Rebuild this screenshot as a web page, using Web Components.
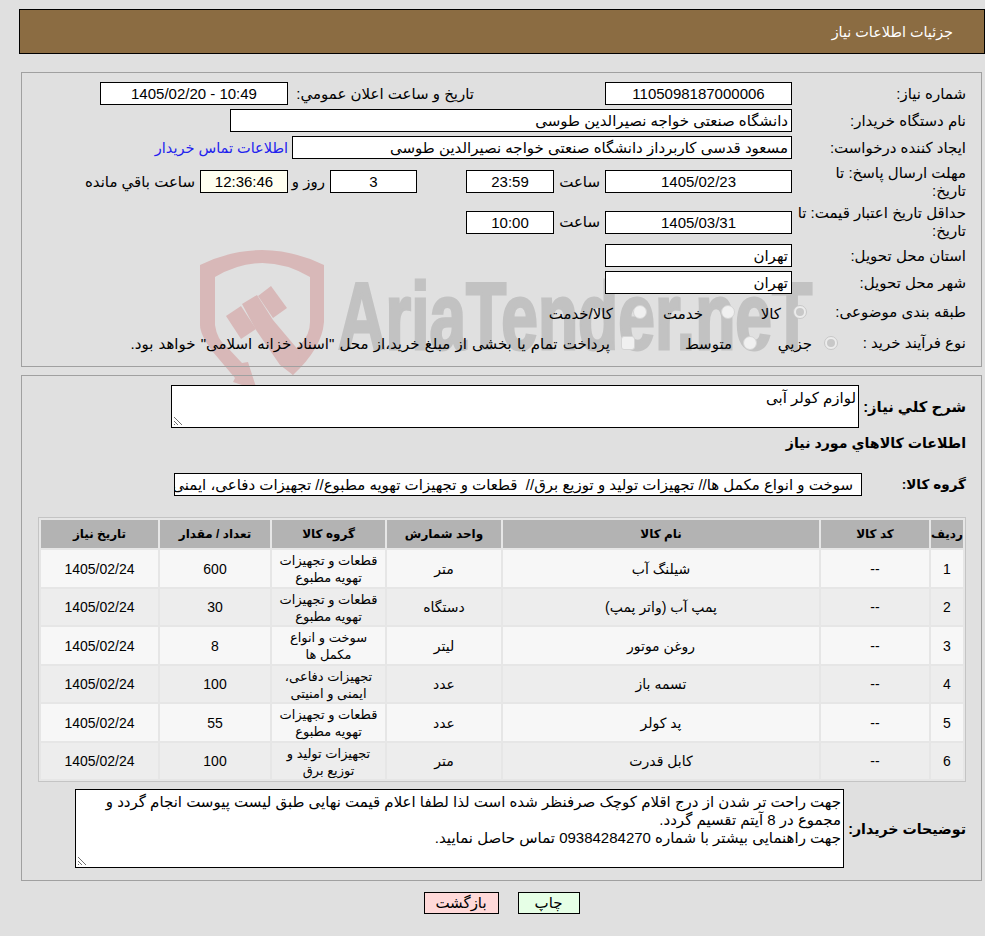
<!DOCTYPE html>
<html lang="fa" dir="rtl">
<head>
<meta charset="utf-8">
<title>جزئیات اطلاعات نیاز</title>
<style>
  html, body { margin: 0; background: #e0e0e0; }
  body {
    position: relative;
    height: 936px;
    overflow: hidden;
    color: #000;
    font: 15px/18px "Liberation Sans", "DejaVu Sans", sans-serif;
  }
  b { font-size: 14.2px; }
  need-row.tall { height: 37px; }
  need-row.tall-b { height: 36px; }
  need-row.opts { height: 28px; }
  need-row.opts-b { height: 25px; }
  need-row.h22 { height: 22px; margin-top: 4px; }
</style>
</head>
<body>

<need-watermark></need-watermark>

<need-header>جزئیات اطلاعات نیاز</need-header>

<need-panel style="margin-top:18px;padding-bottom:11px">
  <need-row>
    <span slot="label">شماره نیاز:</span>
    <need-field w="187">1105098187000006</need-field>
    <need-text w="181" before="131">تاریخ و ساعت اعلان عمومي:</need-text>
    <need-field w="188" before="5" dir="ltr">1405/02/20 - 10:49</need-field>
  </need-row>
  <need-row>
    <span slot="label">نام دستگاه خریدار:</span>
    <need-field w="562" align="right">دانشگاه صنعتی خواجه نصیرالدین طوسی</need-field>
  </need-row>
  <need-row>
    <span slot="label">ایجاد کننده درخواست:</span>
    <need-field w="500" align="right">مسعود قدسی کاربرداز دانشگاه صنعتی خواجه نصیرالدین طوسی</need-field>
    <need-text w="133" before="4" color="#2222ee" style="font-size:14.5px">اطلاعات تماس خریدار</need-text>
  </need-row>
  <need-row class="tall">
    <span slot="label">مهلت ارسال پاسخ: تا<br>تاریخ:</span>
    <need-field w="187">1405/02/23</need-field>
    <need-text w="46" before="5">ساعت</need-text>
    <need-field w="88">23:59</need-field>
    <need-field w="87" before="49">3</need-field>
    <need-text w="37" before="5">روز و</need-text>
    <need-field w="88" bg="#fffff0">12:36:46</need-field>
    <need-text w="112" before="5">ساعت باقي مانده</need-text>
  </need-row>
  <need-row class="tall-b">
    <span slot="label">حداقل تاریخ اعتبار قیمت: تا<br>تاریخ:</span>
    <need-field w="187">1405/03/31</need-field>
    <need-text w="46" before="5">ساعت</need-text>
    <need-field w="88">10:00</need-field>
  </need-row>
  <need-row>
    <span slot="label">استان محل تحویل:</span>
    <need-field w="187" align="right">تهران</need-field>
  </need-row>
  <need-row>
    <span slot="label">شهر محل تحویل:</span>
    <need-field w="187" align="right">تهران</need-field>
  </need-row>
  <need-row class="opts">
    <span slot="label">طبقه بندی موضوعی:</span>
    <need-option w="72" shift="-15" gap="12" checked>کالا</need-option>
    <need-option w="88" gap="18">خدمت</need-option>
    <need-option w="85" gap="20">کالا/خدمت</need-option>
  </need-row>
  <need-row class="opts-b">
    <span slot="label">نوع فرآیند خرید :</span>
    <need-option w="81" shift="-46" gap="12" checked>جزیي</need-option>
    <need-option w="122" gap="11">متوسط</need-option>
    <need-option w="500" gap="11" square style="word-spacing:1px">پرداخت تمام یا بخشی از مبلغ خرید،از محل "اسناد خزانه اسلامی" خواهد بود.</need-option>
  </need-row>
</need-panel>

<need-panel style="margin-top:8px;padding-bottom:12px;gap:0">
  <need-row style="height:43px;--label-w:107px">
    <b slot="label" style="font-size:14.8px">شرح کلي نياز:</b>
    <need-memo w="688" h="43">لوازم کولر آبی</need-memo>
  </need-row>
  <need-row class="h22">
    <b slot="label" style="white-space:nowrap">اطلاعات کالاهاي مورد نياز</b>
  </need-row>
  <need-row style="margin-top:19px;--label-w:104px">
    <b slot="label" style="font-size:13.6px">گروه کالا:</b>
    <need-field w="688" align="right" pad="8">سوخت و انواع مکمل ها// تجهیزات تولید و توزیع برق//&nbsp; قطعات و تجهیزات تهویه مطبوع// تجهیزات دفاعی، ایمنی و امنیتی</need-field>
  </need-row>
  <goods-table style="margin-top:21px"></goods-table>
  <need-row style="height:79px;margin-top:7px;--label-w:122px">
    <b slot="label">توضیحات خریدار:</b>
    <need-memo w="769" h="79">جهت راحت تر شدن از درج اقلام کوچک صرفنظر شده است لذا لطفا اعلام قیمت نهایی طبق لیست پیوست انجام گردد و<br>مجموع در 8 آیتم تقسیم گردد.<br>جهت راهنمایی بیشتر با شماره 09384284270 تماس حاصل نمایید.</need-memo>
  </need-row>
</need-panel>

<need-actions>
  <need-button w="62" bg="#e6ffe6">چاپ</need-button>
  <need-button w="75" bg="#ffd9d9">بازگشت</need-button>
</need-actions>

<script>
/* ── <need-header> ── brown title bar */
class NeedHeader extends HTMLElement {
  constructor() {
    super();
    this.attachShadow({ mode: 'open' });
    this.shadowRoot.innerHTML = `
      <style>
        :host {
          display: flex;
          align-items: center;
          box-sizing: border-box;
          width: 966px;
          height: 45px;
          margin: 9px 0 0 0;
          padding: 0 31px 0 0;
          background: #8b6c42;
          border: 1px solid #000;
          color: #fff;
          font-size: 14.4px;
        }
      </style>
      <slot></slot>
    `;
  }
}
customElements.define('need-header', NeedHeader);

/* ── <need-watermark> ── faded logo lying behind the form */
class NeedWatermark extends HTMLElement {
  constructor() {
    super();
    this.attachShadow({ mode: 'open' });
    this.shadowRoot.innerHTML = `
      <style>
        :host {
          position: absolute;
          left: 0;
          top: 0;
          width: 985px;
          height: 395px;
          overflow: hidden;
          direction: ltr;
          pointer-events: none;
        }
        svg { position: absolute; left: 0; top: 0; }
        .name {
          position: absolute;
          left: 338px;
          top: 262px;
          font: bold 94px/110px "Liberation Sans", sans-serif;
          color: #c2c2c2;
          -webkit-text-stroke: 3px #c2c2c2;
          white-space: nowrap;
          transform: scaleX(.7);
          transform-origin: 0 0;
        }
      </style>
      <svg width="985" height="395" viewBox="0 0 985 395" fill="#d8b8b8">
        <path d="M200 265Q262 235 324 265L324 322Q322 348 293 375L282 362L300 345Q310 335 310 322L310 277Q262 249 215 277L215 325Q217 340 227 347L242 363L248 362L257 390L233 382L235 378L213 352Q200 335 200 325Z"/>
        <path d="M226 316L241 306L256 329L241 339Z"/>
        <path d="M258 296L271 286L287 308L273 318Z"/>
        <path d="M242 304L257 295L273 320L300 352L293 375L280 365L256 330Z"/>
      </svg>
      <div class="name">AriaTender.neT</div>
    `;
  }
}
customElements.define('need-watermark', NeedWatermark);

/* ── <need-panel> ── bordered group of rows */
class NeedPanel extends HTMLElement {
  constructor() {
    super();
    this.attachShadow({ mode: 'open' });
    this.shadowRoot.innerHTML = `
      <style>
        :host {
          position: relative;
          display: flex;
          flex-direction: column;
          gap: 4px;
          box-sizing: border-box;
          width: 961px;
          margin-right: 3px;
          padding: 9px 15px 0 0;
          border: 1px solid #a0a0a0;
        }
      </style>
      <slot></slot>
    `;
  }
}
customElements.define('need-panel', NeedPanel);

/* ── <need-row> ── label slot on the right, fields after it */
class NeedRow extends HTMLElement {
  constructor() {
    super();
    this.attachShadow({ mode: 'open' });
    this.shadowRoot.innerHTML = `
      <style>
        :host {
          display: flex;
          align-items: center;
          height: 23px;
        }
        .label { flex: none; width: var(--label-w, 174px); white-space: nowrap; }
        .body { display: flex; align-items: center; height: 100%; }
      </style>
      <div class="label"><slot name="label"></slot></div>
      <div class="body"><slot></slot></div>
    `;
  }
}
customElements.define('need-row', NeedRow);

/* ── <need-field> ── read-only value box */
class NeedField extends HTMLElement {
  constructor() {
    super();
    this.attachShadow({ mode: 'open' });
    this.shadowRoot.innerHTML = `
      <style>
        :host {
          display: block;
          flex: none;
          box-sizing: border-box;
          height: 23px;
          padding: 0 var(--pad, 3px);
          background: var(--bg, #fff);
          border: 1px solid #000;
          line-height: 21px;
          text-align: var(--align, center);
          white-space: nowrap;
          overflow: hidden;
        }
      </style>
      <slot></slot>
    `;
  }

  connectedCallback() {
    this.style.width = this.getAttribute('w') + 'px';
    if (this.hasAttribute('before')) this.style.marginRight = this.getAttribute('before') + 'px';
    if (this.hasAttribute('bg')) this.style.setProperty('--bg', this.getAttribute('bg'));
    if (this.hasAttribute('align')) this.style.setProperty('--align', this.getAttribute('align'));
    if (this.hasAttribute('pad')) this.style.setProperty('--pad', this.getAttribute('pad') + 'px');
  }
}
customElements.define('need-field', NeedField);

/* ── <need-text> ── loose text between fields */
class NeedText extends HTMLElement {
  constructor() {
    super();
    this.attachShadow({ mode: 'open' });
    this.shadowRoot.innerHTML = `
      <style>
        :host { display: block; flex: none; white-space: nowrap; }
      </style>
      <slot></slot>
    `;
  }

  connectedCallback() {
    this.style.width = this.getAttribute('w') + 'px';
    if (this.hasAttribute('before')) this.style.marginRight = this.getAttribute('before') + 'px';
    if (this.hasAttribute('color')) this.style.color = this.getAttribute('color');
  }
}
customElements.define('need-text', NeedText);

/* ── <need-option> ── disabled radio with its caption */
class NeedOption extends HTMLElement {
  constructor() {
    super();
    this.attachShadow({ mode: 'open' });
    this.shadowRoot.innerHTML = `
      <style>
        :host {
          display: flex;
          align-items: center;
          flex: none;
          white-space: nowrap;
        }
        .mark {
          flex: none;
          box-sizing: border-box;
          width: 14px;
          height: 14px;
          border: 1px solid #d4d4d4;
          border-radius: 50%;
          background: #f0f0f0;
          display: grid;
          place-items: center;
        }
        .mark.square { border-radius: 3px; }
        .dot { width: 8px; height: 8px; border-radius: 50%; background: #c8c8c8; display: none; }
        :host([checked]) .mark { background: #ececec; border-color: #c8c8c8; }
        :host([checked]) .dot { display: block; }
        .caption { padding-top: 3px; }
      </style>
      <span class="mark"><span class="dot"></span></span>
      <span class="caption"><slot></slot></span>
    `;
  }

  connectedCallback() {
    this.style.width = this.getAttribute('w') + 'px';
    this.style.gap = this.getAttribute('gap') + 'px';
    if (this.hasAttribute('square')) this.shadowRoot.querySelector('.mark').classList.add('square');
    if (this.hasAttribute('shift')) this.style.marginRight = this.getAttribute('shift') + 'px';
  }
}
customElements.define('need-option', NeedOption);

/* ── <need-memo> ── multi-line box with a resize grip */
class NeedMemo extends HTMLElement {
  constructor() {
    super();
    this.attachShadow({ mode: 'open' });
    this.shadowRoot.innerHTML = `
      <style>
        :host {
          position: relative;
          display: block;
          flex: none;
          box-sizing: border-box;
          padding: 3px 2px;
          background: #fff;
          border: 1px solid #000;
          white-space: nowrap;
          overflow: hidden;
        }
        svg { position: absolute; left: 1px; bottom: 1px; }
      </style>
      <slot></slot>
      <svg width="10" height="10" viewBox="0 0 10 10" stroke="#707070" fill="none">
        <path d="M1 1L9 9M1 5L5 9M1 8L2 9"/>
      </svg>
    `;
  }

  connectedCallback() {
    this.style.width = this.getAttribute('w') + 'px';
    this.style.height = this.getAttribute('h') + 'px';
  }
}
customElements.define('need-memo', NeedMemo);

/* ── <goods-table> ── list of requested goods */
const GOODS_HEAD = ['ردیف', 'کد کالا', 'نام کالا', 'واحد شمارش', 'گروه کالا', 'تعداد / مقدار', 'تاریخ نیاز'];
const GOODS_ROWS = [
  ['1', '--', 'شیلنگ آب', 'متر', 'قطعات و تجهیزات<br>تهویه مطبوع', '600', '1405/02/24'],
  ['2', '--', 'پمپ آب (واتر پمپ)', 'دستگاه', 'قطعات و تجهیزات<br>تهویه مطبوع', '30', '1405/02/24'],
  ['3', '--', 'روغن موتور', 'لیتر', 'سوخت و انواع<br>مکمل ها', '8', '1405/02/24'],
  ['4', '--', 'تسمه باز', 'عدد', 'تجهیزات دفاعی،<br>ایمنی و امنیتی', '100', '1405/02/24'],
  ['5', '--', 'پد کولر', 'عدد', 'قطعات و تجهیزات<br>تهویه مطبوع', '55', '1405/02/24'],
  ['6', '--', 'کابل قدرت', 'متر', 'تجهیزات تولید و<br>توزیع برق', '100', '1405/02/24'],
];

class GoodsTable extends HTMLElement {
  constructor() {
    super();
    this.attachShadow({ mode: 'open' });
    const head = GOODS_HEAD.map((t) => `<div class="cell th">${t}</div>`).join('');
    const rows = GOODS_ROWS.map((row, i) =>
      row.map((t, col) => `<div class="cell ${i % 2 ? 'even' : 'odd'}${col === 4 ? ' group' : ''}">${t}</div>`).join('')
    ).join('');
    this.shadowRoot.innerHTML = `
      <style>
        :host {
          display: grid;
          grid-template-columns: 32px 108px 316px 114px 113px 110px 117px;
          grid-template-rows: 28px 37px 36px 37px 36px 37px 36px;
          gap: 2px;
          box-sizing: border-box;
          width: 928px;
          height: 265px;
          padding: 2px;
          background: #e6e6e6;
          border: 1px solid #c4c4c4;
          font-size: 14px;
        }
        .cell {
          display: flex;
          align-items: center;
          justify-content: center;
          text-align: center;
          line-height: 17px;
          white-space: nowrap;
          padding-top: 1px;
        }
        .th { background: #b3b3b3; font-weight: bold; font-size: 12px; }
        .odd { background: #f7f7f7; }
        .even { background: #ededed; }
        .group { font-size: 13px; }
      </style>
      ${head}${rows}
    `;
  }
}
customElements.define('goods-table', GoodsTable);

/* ── <need-actions> / <need-button> ── print and back */
class NeedActions extends HTMLElement {
  constructor() {
    super();
    this.attachShadow({ mode: 'open' });
    this.shadowRoot.innerHTML = `
      <style>
        :host {
          position: relative;
          display: flex;
          justify-content: center;
          gap: 19px;
          width: 961px;
          margin: 11px 3px 0 0;
        }
      </style>
      <slot></slot>
    `;
  }
}
customElements.define('need-actions', NeedActions);

class NeedButton extends HTMLElement {
  constructor() {
    super();
    this.attachShadow({ mode: 'open' });
    this.shadowRoot.innerHTML = `
      <style>
        :host {
          display: block;
          box-sizing: border-box;
          height: 22px;
          background: var(--bg);
          border: 1px solid #000;
          line-height: 20px;
          text-align: center;
        }
      </style>
      <slot></slot>
    `;
  }

  connectedCallback() {
    this.style.width = this.getAttribute('w') + 'px';
    this.style.setProperty('--bg', this.getAttribute('bg'));
  }
}
customElements.define('need-button', NeedButton);
</script>
</body>
</html>
